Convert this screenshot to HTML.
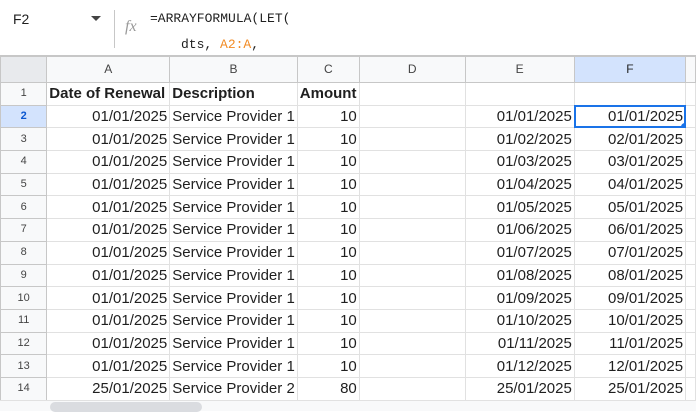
<!DOCTYPE html><html><head><style>
body{margin:0;width:696px;height:410px;overflow:hidden;background:#fff;font-family:"Liberation Sans",Arial,sans-serif;position:relative}
.fb{position:absolute;left:0;top:0;width:696px;height:55px;background:#fff;border-bottom:1px solid #c7c7c7}
.mono{font-family:"Liberation Mono",monospace;font-size:13px;color:#1f1f1f;position:absolute}
table{position:absolute;left:0;top:56px;border-collapse:collapse;table-layout:fixed}
td{border:1px solid #e1e1e1;font-size:15px;color:#1f1f1f;padding:0 2px;white-space:nowrap;overflow:hidden;height:21.7px;line-height:21px}
td.rh{background:#f8f9fa;color:#444;font-size:11px;text-align:center;border-color:#c7c7c7}
tr.h td{background:#f8f9fa;color:#444;font-size:12px;text-align:center;height:25px;border-color:#c7c7c7}
.r{text-align:right}
.b{font-weight:bold}
.sel{background:#d3e3fd!important;color:#0b57d0!important;font-weight:bold}
</style></head><body>
<div class="fb">
<div style="position:absolute;left:13px;top:11px;font-size:14px;color:#1f1f1f">F2</div>
<div style="position:absolute;left:91px;top:16px;width:0;height:0;border-left:5px solid transparent;border-right:5px solid transparent;border-top:5px solid #444"></div>
<div style="position:absolute;left:114px;top:10px;width:1px;height:38px;background:#c7c7c7"></div>
<div style="position:absolute;left:125px;top:18px;font-size:16px;font-style:italic;color:#999;font-family:'Liberation Serif',serif">fx</div>
<div class="mono" style="left:150px;top:11px">=ARRAYFORMULA(LET(</div>
<div class="mono" style="left:181px;top:37px">dts, <span style="color:#f28b24">A2:A</span>,</div>
</div>
<table>
<colgroup><col style="width:47px"><col style="width:123px"><col style="width:127px"><col style="width:62px"><col style="width:108px"><col style="width:110px"><col style="width:112px"><col style="width:10px"></colgroup>
<tr class="h"><td style="background:#e8eaed"></td><td>A</td><td>B</td><td>C</td><td>D</td><td>E</td><td class="sel" style="font-weight:normal;color:#1f1f1f!important">F</td><td></td></tr>
<tr><td class="rh">1</td><td class="b">Date of Renewal</td><td class="b">Description</td><td class="b">Amount</td><td></td><td></td><td></td><td></td></tr>
<tr><td class="rh sel">2</td><td class="r">01/01/2025</td><td>Service Provider 1</td><td class="r">10</td><td></td><td class="r">01/01/2025</td><td class="r" style="outline:2px solid #1a73e8;outline-offset:-2px;position:relative">01/01/2025<span style="position:absolute;right:-4px;bottom:-4px;width:8px;height:8px;border-radius:50%;background:#1a73e8"></span></td><td></td></tr>
<tr><td class="rh">3</td><td class="r">01/01/2025</td><td>Service Provider 1</td><td class="r">10</td><td></td><td class="r">01/02/2025</td><td class="r">02/01/2025</td><td></td></tr>
<tr><td class="rh">4</td><td class="r">01/01/2025</td><td>Service Provider 1</td><td class="r">10</td><td></td><td class="r">01/03/2025</td><td class="r">03/01/2025</td><td></td></tr>
<tr><td class="rh">5</td><td class="r">01/01/2025</td><td>Service Provider 1</td><td class="r">10</td><td></td><td class="r">01/04/2025</td><td class="r">04/01/2025</td><td></td></tr>
<tr><td class="rh">6</td><td class="r">01/01/2025</td><td>Service Provider 1</td><td class="r">10</td><td></td><td class="r">01/05/2025</td><td class="r">05/01/2025</td><td></td></tr>
<tr><td class="rh">7</td><td class="r">01/01/2025</td><td>Service Provider 1</td><td class="r">10</td><td></td><td class="r">01/06/2025</td><td class="r">06/01/2025</td><td></td></tr>
<tr><td class="rh">8</td><td class="r">01/01/2025</td><td>Service Provider 1</td><td class="r">10</td><td></td><td class="r">01/07/2025</td><td class="r">07/01/2025</td><td></td></tr>
<tr><td class="rh">9</td><td class="r">01/01/2025</td><td>Service Provider 1</td><td class="r">10</td><td></td><td class="r">01/08/2025</td><td class="r">08/01/2025</td><td></td></tr>
<tr><td class="rh">10</td><td class="r">01/01/2025</td><td>Service Provider 1</td><td class="r">10</td><td></td><td class="r">01/09/2025</td><td class="r">09/01/2025</td><td></td></tr>
<tr><td class="rh">11</td><td class="r">01/01/2025</td><td>Service Provider 1</td><td class="r">10</td><td></td><td class="r">01/10/2025</td><td class="r">10/01/2025</td><td></td></tr>
<tr><td class="rh">12</td><td class="r">01/01/2025</td><td>Service Provider 1</td><td class="r">10</td><td></td><td class="r">01/11/2025</td><td class="r">11/01/2025</td><td></td></tr>
<tr><td class="rh">13</td><td class="r">01/01/2025</td><td>Service Provider 1</td><td class="r">10</td><td></td><td class="r">01/12/2025</td><td class="r">12/01/2025</td><td></td></tr>
<tr><td class="rh">14</td><td class="r">25/01/2025</td><td>Service Provider 2</td><td class="r">80</td><td></td><td class="r">25/01/2025</td><td class="r">25/01/2025</td><td></td></tr>
</table>
<div style="position:absolute;left:0;top:400px;width:696px;height:10px;background:#f8f9fa;border-top:1px solid #e1e1e1"></div>
<div style="position:absolute;left:50px;top:402px;width:152px;height:10px;border-radius:5px;background:#dadce0"></div>
</body></html>
